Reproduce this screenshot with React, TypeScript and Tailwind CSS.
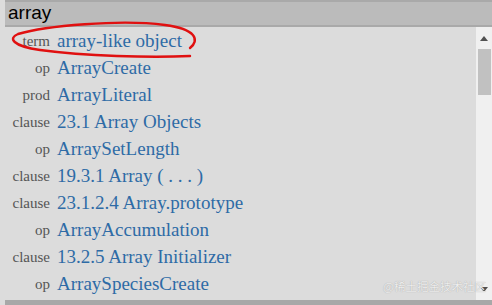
import React from "react";

interface Entry {
    kind: string;
    label: string;
}

const entries: Entry[] = [
    { kind: "term", label: "array-like object" },
    { kind: "op", label: "ArrayCreate" },
    { kind: "prod", label: "ArrayLiteral" },
    { kind: "clause", label: "23.1 Array Objects" },
    { kind: "op", label: "ArraySetLength" },
    { kind: "clause", label: "19.3.1 Array ( . . . )" },
    { kind: "clause", label: "23.1.2.4 Array.prototype" },
    { kind: "op", label: "ArrayAccumulation" },
    { kind: "clause", label: "13.2.5 Array Initializer" },
    { kind: "op", label: "ArraySpeciesCreate" },
];

const App = () => {
    return (
        <div className="relative w-[492px] h-[305px] overflow-hidden bg-[#dcdcdc]">
            <div className="pl-[5px]">
                <div className="h-[27px] bg-[#bbbbbb] border-t-2 border-b-2 border-[#a9a9a9] flex items-center pl-[3px] text-[19px] text-black font-['Liberation_Sans',sans-serif]">
                    array
                </div>
            </div>

            <div className="flex h-[273px]">
                <ul className="flex-1 pt-[1px] font-['Liberation_Serif',serif]">
                    {entries.map(({ kind, label }, idx) => (
                        <li key={idx} className="h-[27px] flex items-center">
                            <span className="w-[50px] text-right text-[15px] text-[#555555]">{kind}</span>
                            <span className="ml-[7px] text-[19px] text-[#2e6ba6] whitespace-nowrap">{label}</span>
                        </li>
                    ))}
                </ul>

                <div className="w-[16px] bg-[#f0f0f0] flex flex-col items-center">
                    <div className="h-[22px] flex items-center justify-center">
                        <svg width="8" height="5" viewBox="0 0 8 5">
                            <path d="M0 5 L4 0 L8 5 Z" fill="#505050" />
                        </svg>
                    </div>
                    <div className="w-[13px] h-[46px] bg-[#c1c1c1]" />
                    <div className="flex-1" />
                    <div className="h-[22px] flex items-center justify-center">
                        <svg width="8" height="5" viewBox="0 0 8 5">
                            <path d="M0 0 L8 0 L4 5 Z" fill="#505050" />
                        </svg>
                    </div>
                </div>
            </div>

            <div className="pl-[5px]">
                <div className="h-[5px] bg-[#a8a8a8]" />
            </div>

            <svg className="absolute left-0 top-0 pointer-events-none" width="492" height="305">
                <path
                    d="M190 48 C200 40 196 29 165 25 C120 19 45 26 18 34 C8 38 12 46 40 50 C85 56 150 58 190 56"
                    fill="none"
                    stroke="#e01010"
                    strokeWidth="2.4"
                    strokeLinecap="round"
                />
            </svg>

            <div className="absolute left-[383px] top-[281px] whitespace-nowrap text-[11.5px] leading-none text-[#ededed] [text-shadow:0_0_1px_#9a9a9a] font-['Noto_Sans_CJK_SC',sans-serif] pointer-events-none">
                @稀土掘金技术社区
            </div>
        </div>
    );
};

export default App;
